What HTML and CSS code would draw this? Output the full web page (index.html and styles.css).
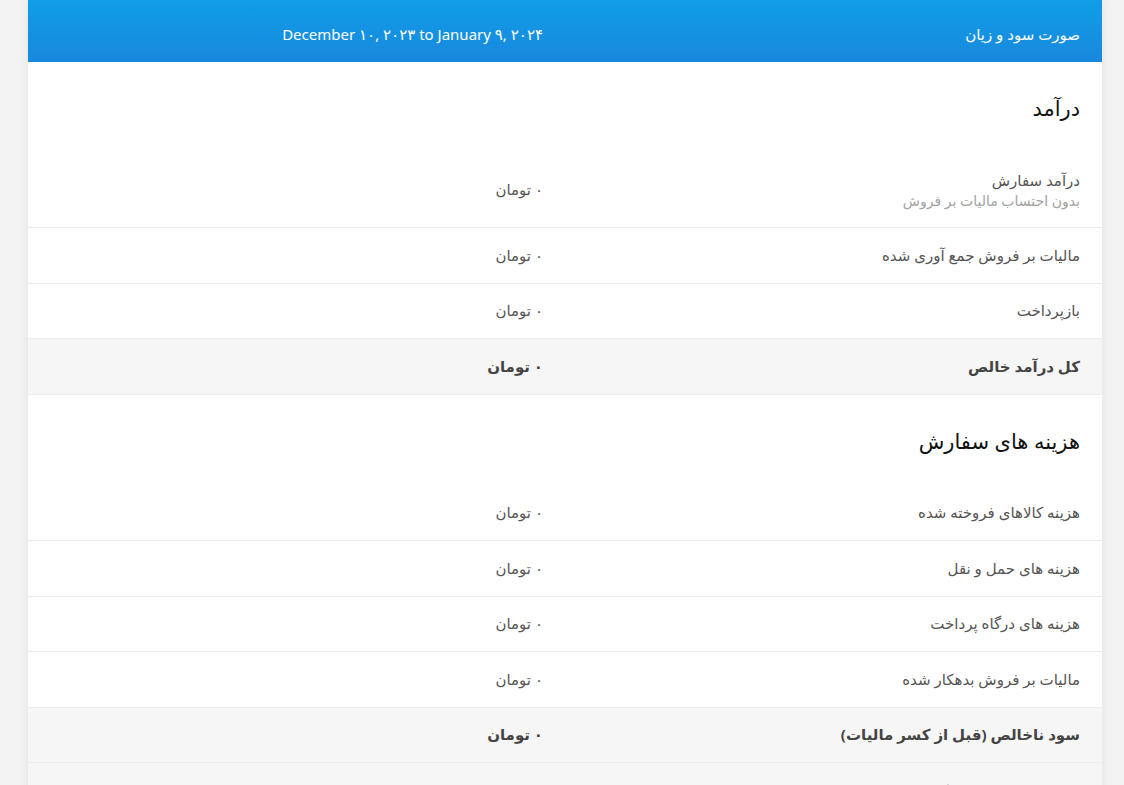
FILE: index.html
```html
<!DOCTYPE html>
<html lang="fa" dir="rtl">
<head>
    <meta charset="UTF-8">
    <meta name="viewport" content="width=device-width, initial-scale=1.0">
    <title>صورت سود و زیان</title>
    <link rel="stylesheet" href="styles.css">
</head>
<body>
    <div class="page">
        <div class="report">
            <div class="report-header">
                <div class="cell">صورت سود و زیان</div>
                <div class="cell date">December ۱۰, ۲۰۲۳ to January ۹, ۲۰۲۴</div>
            </div>

            <!-- Income -->
            <h2 class="section-title">درآمد</h2>
            <div class="row">
                <div class="cell">
                    درآمد سفارش
                    <div class="hint">بدون احتساب مالیات بر فروش</div>
                </div>
                <div class="cell value">۰ تومان</div>
            </div>
            <div class="row">
                <div class="cell">مالیات بر فروش جمع آوری شده</div>
                <div class="cell value">۰ تومان</div>
            </div>
            <div class="row">
                <div class="cell">بازپرداخت</div>
                <div class="cell value">۰ تومان</div>
            </div>
            <div class="row total">
                <div class="cell">کل درآمد خالص</div>
                <div class="cell value">۰ تومان</div>
            </div>

            <!-- Order costs -->
            <h2 class="section-title">هزینه های سفارش</h2>
            <div class="row">
                <div class="cell">هزینه کالاهای فروخته شده</div>
                <div class="cell value">۰ تومان</div>
            </div>
            <div class="row">
                <div class="cell">هزینه های حمل و نقل</div>
                <div class="cell value">۰ تومان</div>
            </div>
            <div class="row">
                <div class="cell">هزینه های درگاه پرداخت</div>
                <div class="cell value">۰ تومان</div>
            </div>
            <div class="row">
                <div class="cell">مالیات بر فروش بدهکار شده</div>
                <div class="cell value">۰ تومان</div>
            </div>
            <div class="row total">
                <div class="cell">سود ناخالص (قبل از کسر مالیات)</div>
                <div class="cell value">۰ تومان</div>
            </div>
            <div class="row total">
                <div class="cell">سود خالص (بعد از کسر مالیات)</div>
                <div class="cell value">۰ تومان</div>
            </div>
        </div>
    </div>
</body>
</html>
```

FILE: styles.css
```css
html, body {
    margin: 0;
    padding: 0;
}
body {
    background-color: #f3f3f3;
    font-family: "Noto Sans", "DejaVu Sans", sans-serif;
    font-size: 15px;
    color: #555;
}
.page {
    padding: 0 22px 0 28px;
}
.report {
    background-color: #fff;
    box-shadow: 0 0 10px rgba(0,0,0,0.07);
}
.report-header {
    display: grid;
    grid-template-columns: 1fr 1fr;
    background: linear-gradient(to bottom, #109de8, #1988dc);
    color: #fff;
    line-height: 22px;
    padding: 23px 0 17px;
}
.cell {
    padding: 0 22px;
}
.section-title {
    margin: 0;
    padding: 31px 22px 30px;
    font-size: 21px;
    line-height: 30px;
    font-weight: normal;
    color: #111;
}
.row {
    display: grid;
    grid-template-columns: 1fr 1fr;
    align-items: center;
    padding: 16.5px 0;
    line-height: 21.5px;
    border-bottom: 1px solid #ececec;
}
.hint {
    font-size: 14px;
    line-height: 19.5px;
    color: #a3a3a3;
}
.total {
    background-color: #f6f6f6;
    font-weight: bold;
    color: #444;
}
```
